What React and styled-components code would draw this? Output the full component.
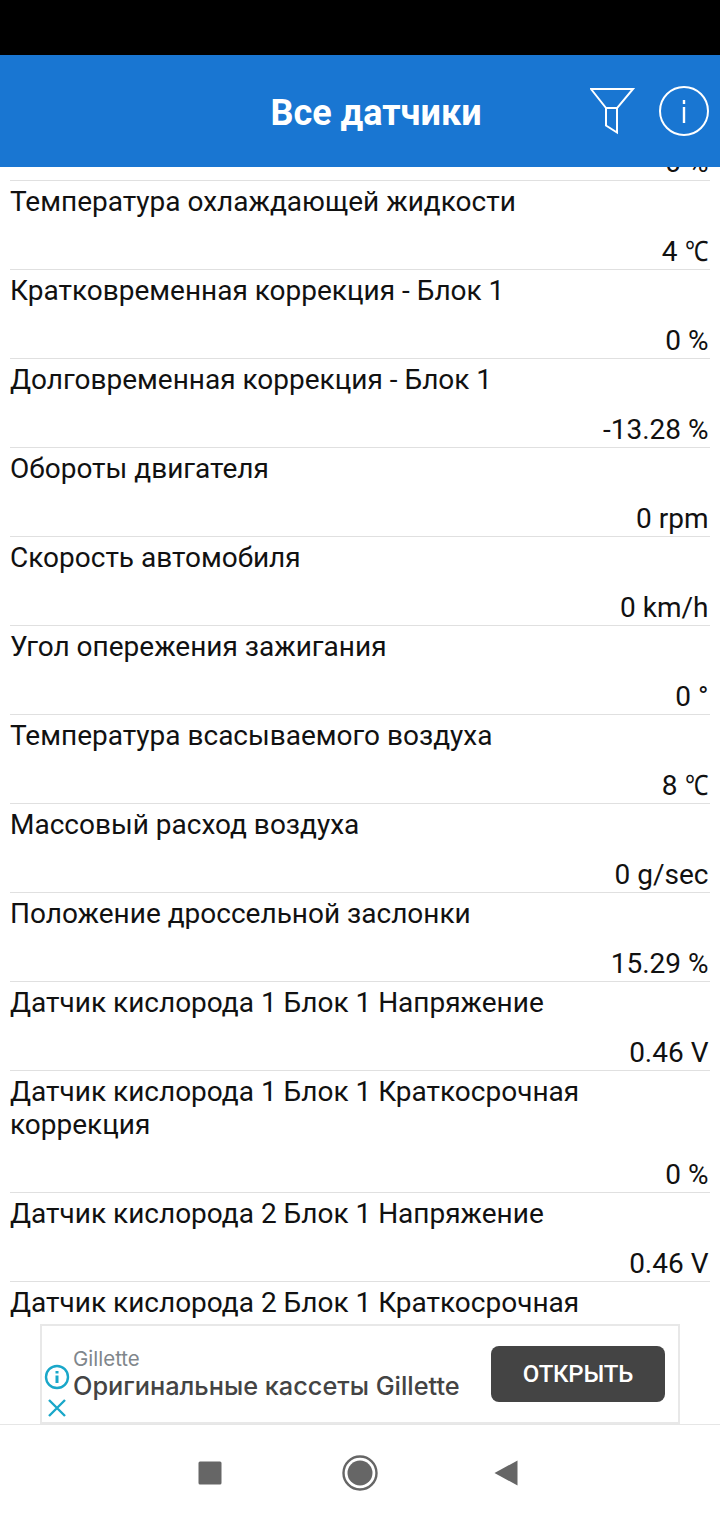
import styled, { createGlobalStyle } from "styled-components";

const sensors = [
  { label: "", value: "0 %" },
  { label: "Температура охлаждающей жидкости", value: "4 ", celsius: true },
  { label: "Кратковременная коррекция - Блок 1", value: "0 %" },
  { label: "Долговременная коррекция - Блок 1", value: "-13.28 %" },
  { label: "Обороты двигателя", value: "0 rpm" },
  { label: "Скорость автомобиля", value: "0 km/h" },
  { label: "Угол опережения зажигания", value: "0 °" },
  { label: "Температура всасываемого воздуха", value: "8 ", celsius: true },
  { label: "Массовый расход воздуха", value: "0 g/sec" },
  { label: "Положение дроссельной заслонки", value: "15.29 %" },
  { label: "Датчик кислорода 1 Блок 1 Напряжение", value: "0.46 V" },
  { label: "Датчик кислорода 1 Блок 1 Краткосрочная коррекция", value: "0 %" },
  { label: "Датчик кислорода 2 Блок 1 Напряжение", value: "0.46 V" },
  { label: "Датчик кислорода 2 Блок 1 Краткосрочная коррекция", value: "0 %" },
];

const App = () => {
  return (
    <Page>
      <GlobalStyle />
      <StatusBar />
      <Header>
        <Title>Все датчики</Title>
        <HeaderIcons>
          <svg width="46" height="48" viewBox="0 0 46 48" fill="none" stroke="#fff" strokeWidth="2">
            <path d="M1 2 H43 L27 21 V45.5 L16 38.5 V21 Z M16 21 H27" />
          </svg>
          <svg width="50" height="50" viewBox="0 0 50 50" fill="none" stroke="#fff" strokeWidth="2">
            <circle cx="25" cy="25" r="24" />
            <path d="M25 21 V37 M25 14 V18" strokeWidth="2.4" />
          </svg>
        </HeaderIcons>
      </Header>
      <ListViewport>
        <List>
          {sensors.map((item, i) => (
            <Row key={i}>
              <Label>{item.label}</Label>
              <Value>
                {item.value}
                {item.celsius && <Celsius>℃</Celsius>}
              </Value>
            </Row>
          ))}
        </List>
      </ListViewport>
      <AdBanner>
        <AdIcons>
          <svg width="26" height="26" viewBox="0 0 26 26" fill="none" stroke="#19a7c9" strokeWidth="2.4">
            <circle cx="13" cy="13" r="11" />
            <path d="M13 11.5 V19 M13 7 V9.5" strokeWidth="3" />
          </svg>
          <svg width="20" height="20" viewBox="0 0 20 20" fill="none" stroke="#19a7c9" strokeWidth="2.4">
            <path d="M2 2 L18 18 M18 2 L2 18" />
          </svg>
        </AdIcons>
        <AdText>
          <AdBrand>Gillette</AdBrand>
          <AdTitle>Оригинальные кассеты Gillette</AdTitle>
        </AdText>
        <AdButton>ОТКРЫТЬ</AdButton>
      </AdBanner>
      <NavBar>
        <svg width="24" height="24" viewBox="0 0 24 24" fill="#666">
          <rect x="0.5" y="0.5" width="23" height="23" rx="1.5" />
        </svg>
        <svg width="36" height="36" viewBox="0 0 36 36">
          <circle cx="18" cy="18" r="16.5" fill="none" stroke="#666" strokeWidth="2.4" />
          <circle cx="18" cy="18" r="12.5" fill="#666" />
        </svg>
        <BackIcon width="24" height="26" viewBox="0 0 24 26" fill="#666">
          <path d="M23.5 0.5 V25.5 L0.5 13 Z" />
        </BackIcon>
      </NavBar>
    </Page>
  );
};

export default App;

const GlobalStyle = createGlobalStyle`
  html, body {
    margin: 0;
    padding: 0;
    background: #fff;
  }
`;

const Page = styled.div`
  display: flex;
  flex-direction: column;
  width: 720px;
  height: 1520px;
  overflow: hidden;
  background: #fff;
  font-family: Roboto, "Liberation Sans", sans-serif;
`;

const StatusBar = styled.div`
  flex: 0 0 55px;
  background: #000;
`;

const Header = styled.header`
  flex: 0 0 112px;
  display: flex;
  align-items: center;
  background: #1976d2;
  color: #fff;
`;

const Title = styled.h1`
  flex: 1;
  margin: 3px 0 0;
  padding-left: 162px;
  text-align: center;
  font-size: 36px;
  font-weight: 700;
  line-height: 40px;
`;

const HeaderIcons = styled.div`
  display: flex;
  align-items: center;
  gap: 23px;
  padding-right: 11px;
`;

const ListViewport = styled.main`
  flex: 1;
  min-height: 0;
  overflow: hidden;
`;

const List = styled.div`
  margin: -75px 10px 0;
`;

const Row = styled.div`
  padding: 4px 0 1px;
  border-bottom: 1px solid #e0e0e0;
`;

const Label = styled.div`
  min-height: 33px;
  margin-bottom: 17px;
  padding-right: 120px;
  font-size: 28px;
  line-height: 33px;
  color: #111;
`;

const Value = styled.div`
  padding-right: 1.5px;
  text-align: right;
  font-size: 28px;
  line-height: 33px;
  color: #111;
`;

// the fallback glyph comes out wider than in the app
const Celsius = styled.span`
  display: inline-block;
  margin-left: -4px;
  transform: scaleX(0.84);
  transform-origin: right;
`;

const AdBanner = styled.aside`
  flex: 0 0 100px;
  box-sizing: border-box;
  display: flex;
  align-items: center;
  width: 640px;
  margin: 0 auto;
  border: 2px solid #e8e8e8;
  padding: 0 13px 0 0;
`;

const AdIcons = styled.div`
  display: flex;
  flex-direction: column;
  align-items: center;
  gap: 8px;
  width: 30px;
  margin: 34px 1px 0 0;
`;

const AdText = styled.div`
  flex: 1;
  min-width: 0;
  font-family: Inter, "Liberation Sans", sans-serif;
`;

const AdBrand = styled.div`
  font-size: 20.5px;
  line-height: 24px;
  color: #80868b;
`;

const AdTitle = styled.div`
  font-size: 25.3px;
  font-weight: 500;
  line-height: 30px;
  color: #444;
  white-space: nowrap;
`;

const AdButton = styled.button`
  flex: 0 0 174px;
  height: 56px;
  border: 0;
  border-radius: 8px;
  background: #444;
  color: #fff;
  font-family: Roboto, "Liberation Sans", sans-serif;
  font-size: 24px;
  font-weight: 500;
  letter-spacing: -0.2px;
`;

const NavBar = styled.nav`
  flex: 0 0 96px;
  box-sizing: border-box;
  display: flex;
  align-items: center;
  gap: 120px;
  border-top: 1px solid #e6e6e6;
  padding-left: 198px;
`;

const BackIcon = styled.svg`
  margin-left: -4px;
`;
